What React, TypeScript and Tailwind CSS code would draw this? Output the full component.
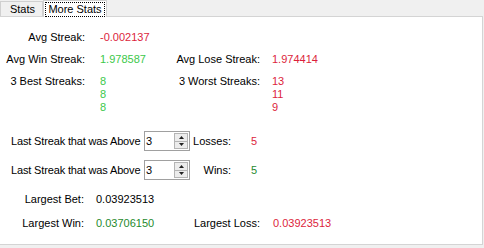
import { ReactNode } from 'react';

const RED = 'text-[#dc1e3c]';
const GREEN = 'text-[#3cc84a]';
const DARK_GREEN = 'text-[#1f8a2e]';

function Label({ w, children }: { w: string; children: ReactNode }) {
  return (
    <div className={`${w} flex shrink-0 justify-end whitespace-nowrap`}>
      {children}
    </div>
  );
}

function Spinner() {
  return (
    <div className="flex h-[20px] w-[46px] shrink-0 border border-[#a0a0a0] bg-white">
      <div className="flex-1 pl-[1px] leading-[18px]">3</div>
      <div className="my-[1px] mr-[1px] flex w-[14px] flex-col border border-[#b4b4b4] bg-[#ececec]">
        <div className="flex flex-1 items-center justify-center border-b border-[#b4b4b4]">
          <svg width="5" height="3" viewBox="0 0 5 3">
            <path d="M2.5 0 L5 3 L0 3 Z" fill="#222" />
          </svg>
        </div>
        <div className="flex flex-1 items-center justify-center">
          <svg width="5" height="3" viewBox="0 0 5 3">
            <path d="M0 0 L5 0 L2.5 3 Z" fill="#222" />
          </svg>
        </div>
      </div>
    </div>
  );
}

export default function App() {
  return (
    <div
      className="h-[248px] w-[484px] overflow-hidden whitespace-nowrap bg-[#f0f0f0] text-[11px] leading-[13px] text-black"
      style={{ fontFamily: '"Liberation Sans", Arial, sans-serif' }}>
      {/* tab strip */}
      <div className="flex h-[16px] items-end">
        <div className="flex h-[15px] w-[43px] items-center justify-center border border-b-0 border-[#d0d0d0] bg-[#f0f0f0] pl-[2px]">
          Stats
        </div>
        <div className="-mb-[1px] flex h-[17px] w-[64px] items-center justify-center border border-b-0 border-[#d0d0d0] bg-white px-[1px]">
          <div className="flex h-[15px] w-full items-center justify-center border border-dotted border-black">
            More Stats
          </div>
        </div>
      </div>

      {/* panel */}
      <div className="h-[229px] w-[483px] border-t border-r border-b border-[#d4d4d4] bg-white">
        <div className="flex flex-col pt-[14px]">
          <div className="flex">
            <Label w="w-[85px]">Avg Streak:</Label>
            <div className={`ml-[15px] ${RED}`}>-0.002137</div>
          </div>

          <div className="mt-[9px] flex">
            <Label w="w-[85px]">Avg Win Streak:</Label>
            <div className={`ml-[15px] w-[80px] ${GREEN}`}>1.978587</div>
            <Label w="w-[80px]">Avg Lose Streak:</Label>
            <div className={`ml-[12px] ${RED}`}>1.974414</div>
          </div>

          <div className="mt-[9px] flex">
            <Label w="w-[85px]">3 Best Streaks:</Label>
            <div className={`ml-[15px] w-[80px] ${GREEN}`}>
              <div>8</div>
              <div>8</div>
              <div>8</div>
            </div>
            <Label w="w-[80px]">3 Worst Streaks:</Label>
            <div className={`ml-[12px] ${RED}`}>
              <div>13</div>
              <div>11</div>
              <div>9</div>
            </div>
          </div>

          <div className="mt-[17px] flex items-center">
            <div className="w-[144px] shrink-0 pl-[11px] tracking-[-0.15px]">Last Streak that was Above</div>
            <Spinner />
            <Label w="w-[41px]">Losses:</Label>
            <div className={`ml-[20px] ${RED}`}>5</div>
          </div>

          <div className="mt-[9px] flex items-center">
            <div className="w-[144px] shrink-0 pl-[11px] tracking-[-0.15px]">Last Streak that was Above</div>
            <Spinner />
            <Label w="w-[41px]">Wins:</Label>
            <div className={`ml-[20px] ${DARK_GREEN}`}>5</div>
          </div>

          <div className="mt-[13px] flex">
            <Label w="w-[84px]">Largest Bet:</Label>
            <div className="ml-[12px]">0.03923513</div>
          </div>

          <div className="mt-[11px] flex">
            <Label w="w-[84px]">Largest Win:</Label>
            <div className={`ml-[12px] w-[100px] ${DARK_GREEN}`}>0.03706150</div>
            <Label w="w-[64px]">Largest Loss:</Label>
            <div className={`ml-[13px] ${RED}`}>0.03923513</div>
          </div>
        </div>
      </div>
    </div>
  );
}
